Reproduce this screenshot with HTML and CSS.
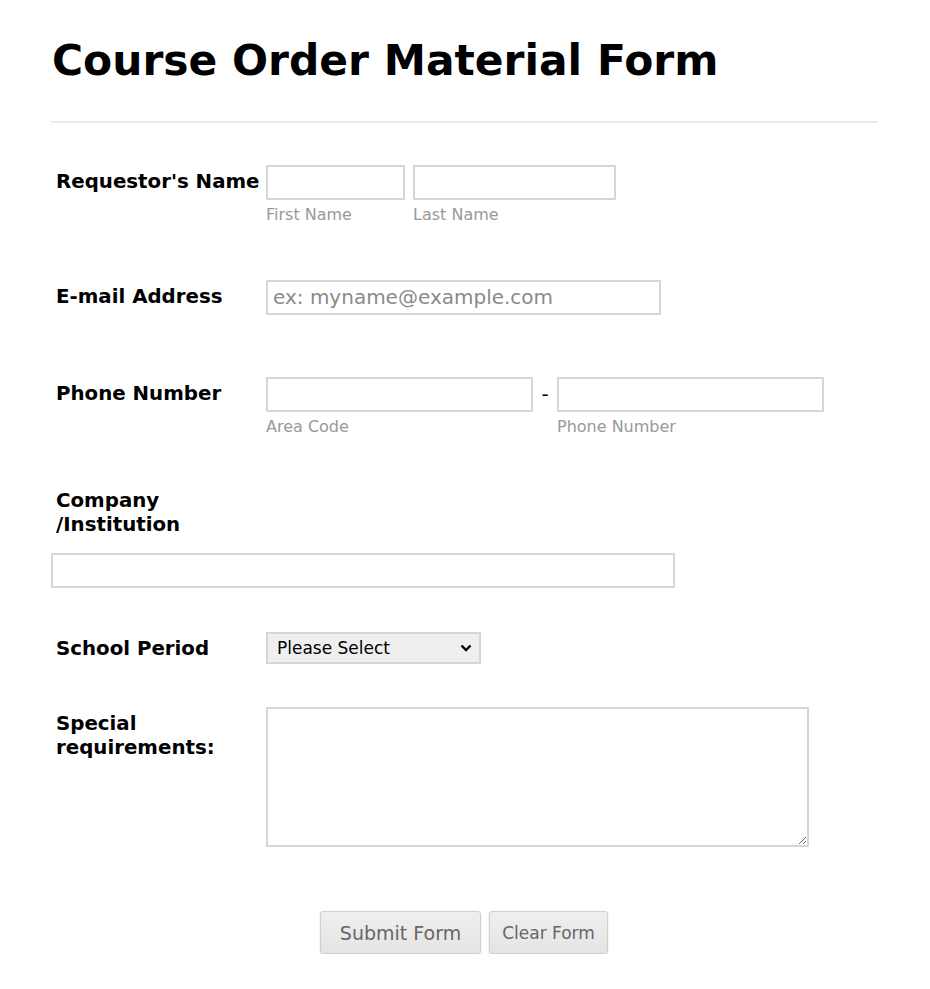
FILE: index.html
```html
<!DOCTYPE html>
<html lang="en">
<head>
  <meta charset="UTF-8" />
  <meta name="viewport" content="width=device-width, initial-scale=1.0"/>
  <title>Course Order Material Form</title>
  <link rel="stylesheet" href="styles.css">
</head>
<body>
  <div class="form-wrap">
    <h1 class="form-title">Course Order Material Form</h1>

    <form class="order-form">
      <div class="row row-name">
        <label class="row-label">Requestor's Name</label>
        <div class="fields">
          <div class="sub">
            <input type="text" class="in-first" />
            <span class="hint">First Name</span>
          </div>
          <div class="sub">
            <input type="text" class="in-last" />
            <span class="hint">Last Name</span>
          </div>
        </div>
      </div>

      <div class="row row-email">
        <label class="row-label">E-mail Address</label>
        <div class="fields">
          <input type="email" class="in-email" placeholder="ex: myname@example.com" />
        </div>
      </div>

      <div class="row row-phone">
        <label class="row-label">Phone Number</label>
        <div class="fields">
          <div class="sub">
            <input type="text" class="in-phone" />
            <span class="hint">Area Code</span>
          </div>
          <span class="dash">-</span>
          <div class="sub">
            <input type="text" class="in-phone" />
            <span class="hint">Phone Number</span>
          </div>
        </div>
      </div>

      <div class="row-top">
        <label class="row-label label-narrow">Company /Institution</label>
        <input type="text" class="in-company" />
      </div>

      <div class="row row-select">
        <label class="row-label">School Period</label>
        <div class="fields">
          <div class="select-wrap">
            <select class="in-select">
              <option>Please Select</option>
            </select>
            <svg class="select-arrow" width="12" height="8" viewBox="0 0 12 8">
              <path d="M1.5 1.5 L6 6 L10.5 1.5" fill="none" stroke="#000" stroke-width="2.4"/>
            </svg>
          </div>
        </div>
      </div>

      <div class="row row-area">
        <label class="row-label label-narrow">Special requirements:</label>
        <div class="fields">
          <textarea class="in-area"></textarea>
        </div>
      </div>

      <div class="buttons">
        <button type="button" class="btn btn-submit">Submit Form</button>
        <button type="reset" class="btn btn-clear">Clear Form</button>
      </div>
    </form>
  </div>
</body>
</html>
```

FILE: styles.css
```css
body {
  font-family: "DejaVu Sans", Verdana, sans-serif;
  background: #fff;
  color: #000;
  margin: 0;
  padding: 0 52px 0 51px;
}
.form-title {
  font-size: 42.4px;
  font-weight: bold;
  margin: 0;
  padding: 36px 0 34px 1px;
  line-height: 1.2;
  border-bottom: 2px solid #ebebeb;
}
.order-form {
  padding-top: 42px;
}
.row {
  display: flex;
  align-items: flex-start;
  margin-bottom: 56px;
}
.row-label {
  padding-left: 5px;
  font-size: 19.8px;
  font-weight: bold;
  line-height: 24px;
  padding-top: 5px;
  box-sizing: border-box;
  width: 215px;
}
.label-narrow {
  width: 165px;
  margin-right: 50px;
}
.fields {
  display: flex;
  align-items: flex-start;
}
.sub {
  display: flex;
  flex-direction: column;
  margin-right: 8px;
}
input, textarea, select {
  font-family: inherit;
  box-sizing: border-box;
  border: 2px solid #d6d6d6;
  border-radius: 1px;
  background: #fff;
  margin: 0;
}
input {
  height: 35px;
  padding: 0 5px;
  font-size: 20px;
}
input::placeholder {
  color: #8a8a8a;
}
.hint {
  font-size: 16px;
  color: #999;
  margin-top: 5px;
}
.in-first { width: 139px; }
.in-last { width: 203px; }
.in-email { width: 395px; }
.in-phone { width: 267px; }
.row-name { margin-bottom: 56px; }
.row-phone .sub { margin-right: 0; }
.dash {
  width: 24px;
  text-align: center;
  font-size: 20px;
  padding-top: 5px;
}
.row-email { margin-bottom: 62px; }
.row-phone { margin-bottom: 52px; }
.row-top {
  margin-bottom: 44px;
}
.row-top .row-label {
  display: block;
  padding-top: 1px;
  margin-bottom: 16px;
}
.in-company {
  display: block;
  width: 624px;
}
.select-wrap {
  position: relative;
}
.in-select {
  appearance: none;
  -webkit-appearance: none;
  display: block;
  width: 215px;
  height: 32px;
  font-size: 17px;
  background: #efefef;
  padding: 0 30px 0 9px;
  color: #000;
  border-radius: 0;
}
.select-arrow {
  position: absolute;
  right: 9px;
  top: 12px;
  pointer-events: none;
}
.row-select { margin-bottom: 43px; }
.in-area {
  width: 543px;
  height: 140px;
  resize: both;
}
.row-area { margin-bottom: 64px; }
.buttons {
  display: flex;
  justify-content: center;
  gap: 8px;
  padding-right: 1px;
}
.btn {
  font-family: inherit;
  height: 43px;
  background: linear-gradient(#efefef, #e4e4e4);
  border: 1px solid #cfcfcf;
  border-radius: 3px;
  box-shadow: 0 1px 2px rgba(0,0,0,0.15);
  color: #666;
  padding-top: 2px;
  cursor: pointer;
}
.btn-submit {
  font-size: 19px;
  width: 161px;
}
.btn-clear {
  font-size: 17px;
  width: 119px;
}
```
